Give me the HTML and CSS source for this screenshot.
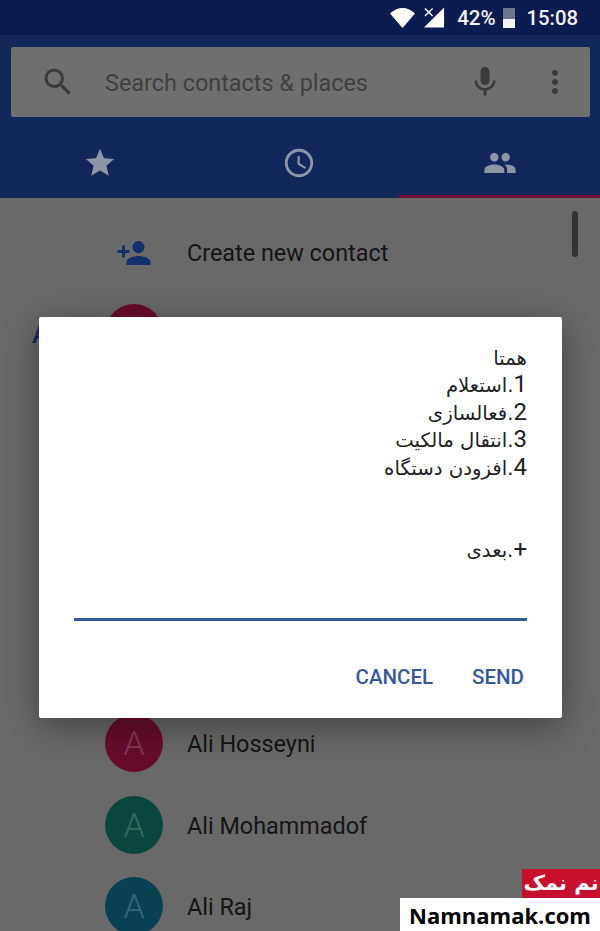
FILE: index.html
```html
<!DOCTYPE html>
<html lang="en">
<head>
  <meta charset="UTF-8" />
  <meta name="viewport" content="width=device-width, initial-scale=1.0"/>
  <title>Contacts</title>
  <link rel="stylesheet" href="styles.css">
</head>
<body>
  <div class="screen">
    <div class="status">
      <svg class="st-wifi" viewBox="0 0 25 20"><path d="M12.5 20 0 5.5C3.5 2 8 0 12.5 0S21.5 2 25 5.5z"/></svg>
      <svg class="st-signal" viewBox="0 0 22 21"><path d="M21 0v21H0z"/><path class="st-x" d="M1 1l8 8M9 1L1 9"/></svg>
      <span class="st-pct">42%</span>
      <div class="battery"><div class="battery-level"></div></div>
      <span class="st-time">15:08</span>
    </div>

    <div class="appbar">
      <div class="search">
        <svg class="icon" viewBox="0 0 24 24"><path d="M15.5 14h-.79l-.28-.27A6.471 6.471 0 0 0 16 9.5 6.5 6.5 0 1 0 9.5 16c1.61 0 3.09-.59 4.23-1.57l.27.28v.79l5 4.99L20.49 19l-4.99-5zm-6 0C7.01 14 5 11.99 5 9.5S7.01 5 9.5 5 14 7.01 14 9.5 11.99 14 9.5 14z"/></svg>
        <span class="search-text">Search contacts &amp; places</span>
        <svg class="icon icon-mic" viewBox="0 0 24 24"><path d="M12 14c1.66 0 2.99-1.34 2.99-3L15 5c0-1.66-1.34-3-3-3S9 3.34 9 5v6c0 1.66 1.34 3 3 3zm5.3-3c0 3-2.54 5.1-5.3 5.1S6.7 14 6.7 11H5c0 3.41 2.72 6.23 6 6.72V21h2v-3.28c3.28-.48 6-3.3 6-6.72h-1.7z"/></svg>
        <svg class="icon" viewBox="0 0 24 24"><path d="M12 8c1.1 0 2-.9 2-2s-.9-2-2-2-2 .9-2 2 .9 2 2 2zm0 2c-1.1 0-2 .9-2 2s.9 2 2 2 2-.9 2-2-.9-2-2-2zm0 6c-1.1 0-2 .9-2 2s.9 2 2 2 2-.9 2-2-.9-2-2-2z"/></svg>
      </div>
      <div class="tabs">
        <div class="tab">
          <svg class="icon" viewBox="0 0 24 24"><path d="M12 17.27L18.18 21l-1.64-7.03L22 9.24l-7.19-.61L12 2 9.19 8.63 2 9.24l5.46 4.73L5.82 21z"/></svg>
        </div>
        <div class="tab">
          <svg class="icon" viewBox="0 0 24 24"><path d="M11.99 2C6.47 2 2 6.48 2 12s4.47 10 9.99 10C17.52 22 22 17.52 22 12S17.52 2 11.99 2zM12 20c-4.42 0-8-3.58-8-8s3.58-8 8-8 8 3.58 8 8-3.58 8-8 8zm.5-13H11v6l5.25 3.15.75-1.23-4.5-2.67z"/></svg>
        </div>
        <div class="tab tab-active">
          <svg class="icon" viewBox="0 0 24 24"><path d="M16 11c1.66 0 2.99-1.34 2.99-3S17.66 5 16 5c-1.66 0-3 1.34-3 3s1.34 3 3 3zm-8 0c1.66 0 2.99-1.34 2.99-3S9.66 5 8 5C6.34 5 5 6.34 5 8s1.34 3 3 3zm0 2c-2.33 0-7 1.17-7 3.5V19h14v-2.5c0-2.33-4.67-3.5-7-3.5zm8 0c-.29 0-.62.02-.97.05 1.16.84 1.97 1.97 1.97 3.45V19h6v-2.5c0-2.33-4.67-3.5-7-3.5z"/></svg>
        </div>
      </div>
    </div>

    <div class="list">
      <div class="scrollbar"></div>
      <div class="row row-create">
        <div class="row-icon">
          <svg class="icon icon-add" viewBox="0 0 24 24"><path d="M15 12c2.21 0 4-1.79 4-4s-1.79-4-4-4-4 1.79-4 4 1.79 4 4 4zm-9-2V7H4v3H1v2h3v3h2v-3h3v-2H6zm9 4c-2.67 0-8 1.34-8 4v2h16v-2c0-2.66-5.33-4-8-4z"/></svg>
        </div>
        <span class="name">Create new contact</span>
      </div>
      <div class="row row-first">
        <span class="section-letter">A</span>
        <div class="avatar red">A</div>
      </div>
      <div class="row">
        <div class="avatar red">A</div>
        <span class="name">Ali Hosseyni</span>
      </div>
      <div class="row">
        <div class="avatar green">A</div>
        <span class="name">Ali Mohammadof</span>
      </div>
      <div class="row">
        <div class="avatar teal">A</div>
        <span class="name">Ali Raj</span>
      </div>
    </div>

    <div class="dialog">
      <div class="message" dir="rtl">همتا
<span class="num">1</span>.استعلام
<span class="num">2</span>.فعالسازی
<span class="num">3</span>.انتقال مالکیت
<span class="num">4</span>.افزودن دستگاه


<span class="num">+</span>.بعدی</div>
      <div class="field"></div>
      <div class="actions">
        <span class="action">CANCEL</span>
        <span class="action">SEND</span>
      </div>
    </div>

    <div class="watermark">
      <div class="wm-fa" dir="rtl">نم نمک</div>
      <div class="wm-en">Namnamak.com</div>
    </div>
  </div>
</body>
</html>
```

FILE: styles.css
```css
body {
  margin: 0;
  font-family: Roboto, "Liberation Sans", sans-serif;
}
.screen {
  position: relative;
  width: 600px;
  height: 931px;
  overflow: hidden;
  background: #696969;
}
.icon {
  width: 36px;
  height: 36px;
  display: block;
}

/* status bar */
.status {
  height: 35px;
  background: #0c1c50;
  display: flex;
  align-items: center;
  padding-right: 22px;
  justify-content: flex-end;
  color: #f4f4f4;
  box-sizing: border-box;
}
.st-wifi {
  width: 25px;
  height: 20px;
  fill: #fff;
  margin-right: 9px;
}
.st-signal {
  width: 21px;
  height: 21px;
  fill: #fff;
  margin-right: 12px;
}
.st-x {
  stroke: #fff;
  stroke-width: 1.5;
  fill: none;
}
.st-pct {
  font-size: 20.5px;
  font-weight: 500;
  margin-right: 7px;
}
.battery {
  width: 12px;
  height: 20px;
  background: #6d7590;
  border-radius: 1px;
  display: flex;
  align-items: flex-end;
  margin-right: 12px;
}
.battery-level {
  width: 100%;
  height: 9px;
  background: #f4f4f4;
}
.st-time {
  font-size: 20.3px;
  font-weight: 500;
}

/* search and tabs */
.appbar {
  background: #13285a;
  height: 163px;
  padding-top: 12px;
  box-sizing: border-box;
  display: flex;
  flex-direction: column;
}
.search {
  margin: 0 10px 0 11px;
  height: 70px;
  background: #6f6f6f;
  border-radius: 2px;
  display: flex;
  align-items: center;
  padding: 0 17px 0 29px;
  flex-shrink: 0;
}
.search .icon {
  fill: #3a3a3a;
}
.search-text {
  flex: 1;
  font-size: 23.4px;
  color: #3f3f3f;
  margin-left: 29px;
  padding-top: 2px;
}
.search .icon-mic {
  margin-right: 34px;
}
.tabs {
  flex: 1;
  display: flex;
}
.tab {
  flex: 1;
  display: flex;
  align-items: center;
  justify-content: center;
  padding-top: 11px;
  box-sizing: border-box;
}
.tab .icon {
  width: 34px;
  height: 34px;
  fill: #8f96a8;
}
.tab-active {
  border-bottom: 3px solid #701338;
  padding: 14px 0 0 2px;
}

/* contact list */
.list {
  position: relative;
  padding-top: 26px;
}
.scrollbar {
  position: absolute;
  top: 13px;
  right: 22px;
  width: 6px;
  height: 46px;
  border-radius: 3px;
  background: #333;
}
.row {
  position: relative;
  display: flex;
  align-items: center;
  padding-left: 105px;
  height: 58px;
  margin-bottom: 23.6px;
}
.row-create {
  margin-bottom: 22px;
}
.row-first {
  margin-bottom: 352px;
}
.row-icon {
  width: 58px;
  display: flex;
  justify-content: center;
}
.icon-add {
  fill: #12306e;
}
.name {
  margin-left: 24px;
  padding-top: 2px;
  font-size: 23.4px;
  color: #151515;
}
.row-create .name {
  padding-top: 0;
}
.avatar {
  width: 58px;
  height: 58px;
  border-radius: 50%;
  display: flex;
  align-items: center;
  justify-content: center;
  font-size: 34px;
  font-weight: 300;
  color: rgba(255, 255, 255, 0.2);
}
.red { background: #680c2d; }
.green { background: #08463e; }
.teal { background: #084252; }
.section-letter {
  position: absolute;
  left: 32px;
  top: 15px;
  font-size: 26px;
  font-weight: 500;
  color: #12285c;
}

/* dialog */
.dialog {
  position: absolute;
  left: 39px;
  top: 317px;
  width: 523px;
  height: 401px;
  box-sizing: border-box;
  padding: 28px 35px 0;
  background: #fff;
  border-radius: 2px;
  box-shadow: 0 8px 36px rgba(0, 0, 0, 0.38);
}
.message {
  white-space: pre-line;
  font-family: "DejaVu Sans", sans-serif;
  font-size: 19.7px;
  line-height: 27.4px;
  color: #222;
  height: 273px;
}
.num {
  font-family: Roboto, sans-serif;
  font-size: 24px;
  line-height: 0;
  color: #222;
}
.field {
  height: 3px;
  background: #33589f;
}
.actions {
  display: flex;
  justify-content: flex-end;
  gap: 39px;
  padding: 44px 3px 0 0;
}
.action {
  font-size: 20.5px;
  font-weight: 500;
  color: #33589f;
}

/* watermark */
.watermark {
  position: absolute;
  right: 0;
  bottom: 0;
  display: flex;
  flex-direction: column;
  align-items: flex-end;
}
.wm-fa {
  width: 78px;
  height: 29px;
  background: #c8102e;
  color: #fff;
  font-family: "DejaVu Sans", sans-serif;
  font-size: 21px;
  font-weight: 700;
  line-height: 29px;
  text-align: center;
  white-space: nowrap;
}
.wm-en {
  width: 200px;
  height: 33px;
  background: #fff;
  color: #000;
  font-family: "Open Sans", sans-serif;
  font-size: 22px;
  font-weight: 700;
  line-height: 35px;
  text-align: center;
}
```
